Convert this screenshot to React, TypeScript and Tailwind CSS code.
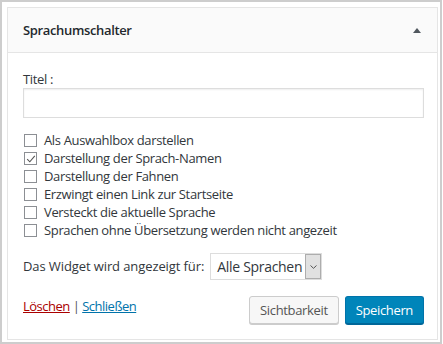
import React from "react";

const font = { fontFamily: '"Open Sans", "Noto Sans", sans-serif' };

function Box({ checked }: { checked?: boolean }) {
  return (
    <span className="relative inline-block w-[13px] h-[13px] border border-[#8c8f94] bg-white shrink-0">
      {checked && (
        <svg className="absolute left-[1px] top-[1px]" width="10" height="10" viewBox="0 0 10 10">
          <path d="M1.2 5.2 L3.8 7.8 L8.8 1.8" fill="none" stroke="#555" strokeWidth="1.1" />
        </svg>
      )}
    </span>
  );
}

const items: [string, boolean][] = [
  ["Als Auswahlbox darstellen", false],
  ["Darstellung der Sprach-Namen", true],
  ["Darstellung der Fahnen", false],
  ["Erzwingt einen Link zur Startseite", false],
  ["Versteckt die aktuelle Sprache", false],
  ["Sprachen ohne Übersetzung werden nicht angezeit", false],
];

export default function App() {
  return (
    <div className="w-[443px] h-[344px] bg-white flex" style={font}>
      <div className="w-[442px] h-[344px] border-2 border-[#cdcdcd] pt-[5px] pl-[5px] pr-[2px] pb-[2px]">
        <div className="w-[431px] h-[333px] border border-[#e5e5e5] bg-white flex flex-col">
          <div className="h-[45px] bg-[#fafafa] border-b border-[#e5e5e5] flex items-center justify-between pl-[15px] pr-[16px]">
            <span className="text-[13px] font-semibold text-[#23282d] tracking-[-0.35px] mt-[1px]">Sprachumschalter</span>
            <svg width="8" height="5" viewBox="0 0 8 5">
              <path d="M0 5 L4 0 L8 5 Z" fill="#50575e" />
            </svg>
          </div>
          <div className="pl-[15px] pr-[13px] flex flex-col text-[13px] text-[#32373c] tracking-[-0.35px]">
            <div className="mt-[18px] leading-[16px]">Titel :</div>
            <div className="mt-[1px] h-[30px] w-[401px] border border-[#dddddd] bg-white shadow-[inset_0_1px_2px_rgba(0,0,0,0.07)]"></div>
            <div className="mt-[13px] flex flex-col">
              {items.map(([t, c]) => (
                <div key={t} className="h-[18px] flex items-center gap-[7px] pl-[1px]">
                  <Box checked={c} />
                  <span className="leading-[18px] whitespace-nowrap">{t}</span>
                </div>
              ))}
            </div>
            <div className="mt-[14px] flex items-center gap-[6px]">
              <span className="whitespace-nowrap tracking-[-0.1px]">Das Widget wird angezeigt für:</span>
              <div className="h-[27px] w-[112px] border border-[#dddddd] flex items-stretch bg-white">
                <span className="flex-1 pl-[6px] flex items-center text-[14px] text-[#32373c] tracking-[-0.3px] whitespace-nowrap">Alle Sprachen</span>
                <span className="w-[16px] bg-[#e1e1e1] border-l border-[#adadad] border-y border-r flex items-center justify-center">
                  <svg width="7" height="4" viewBox="0 0 7 4">
                    <path d="M0.5 0.5 L3.5 3.3 L6.5 0.5" fill="none" stroke="#555" strokeWidth="1" />
                  </svg>
                </span>
              </div>
            </div>
            <div className="mt-[16px] flex items-start justify-between">
              <div className="mt-[1px] whitespace-nowrap tracking-[-0.5px]">
                <span className="text-[#a00] underline">Löschen</span>
                <span className="text-[#555]"> | </span>
                <span className="text-[#0073aa] underline">Schließen</span>
              </div>
              <div className="flex gap-[6px]">
                <button className="h-[28px] px-[10px] rounded-[3px] border border-[#cccccc] bg-[#f7f7f7] text-[#555] text-[13px] shadow-[0_1px_0_#cccccc] leading-[26px]">Sichtbarkeit</button>
                <button className="h-[28px] px-[10px] rounded-[3px] border border-[#0073aa] border-b-[#006799] bg-[#0085ba] text-white text-[13px] shadow-[0_1px_0_#006799] leading-[26px]">Speichern</button>
              </div>
            </div>
          </div>
        </div>
      </div>
    </div>
  );
}
